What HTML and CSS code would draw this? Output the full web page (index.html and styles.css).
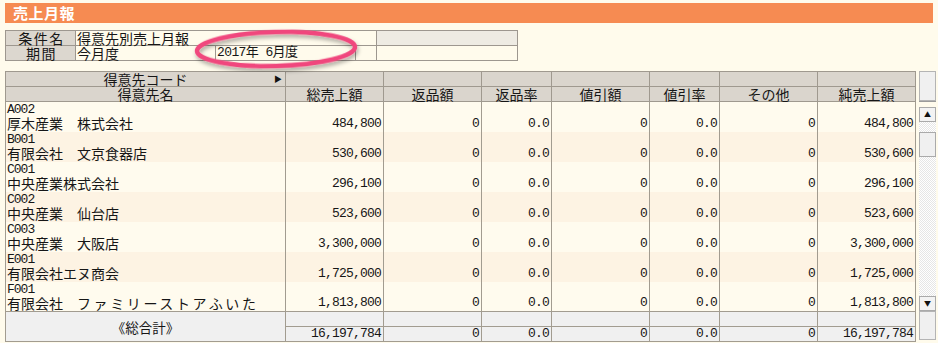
FILE: index.html
```html
<!DOCTYPE html>
<html lang="ja">
<head>
<meta charset="utf-8">
<title>売上月報</title>
<link rel="stylesheet" href="styles.css">
</head>
<body>
<div class="page">
  <div class="titlebar">売上月報</div>

  <div class="cond-wrap">
    <table class="cond">
      <colgroup>
        <col class="c-label"><col class="c-a"><col class="c-b"><col class="c-c"><col class="c-d">
      </colgroup>
      <tr>
        <th class="label">条件名</th>
        <td colspan="3">得意先別売上月報</td>
        <td class="grey"></td>
      </tr>
      <tr>
        <th class="label">期間</th>
        <td>今月度</td>
        <td class="mono-date">2017年 6月度</td>
        <td></td>
        <td></td>
      </tr>
    </table>
    <svg class="mark" width="176" height="52" viewBox="0 0 176 52">
      <defs>
        <filter id="sh" x="-10%" y="-30%" width="120%" height="170%">
          <feDropShadow dx="1" dy="3" stdDeviation="2" flood-color="#000" flood-opacity="0.35"/>
        </filter>
      </defs>
      <ellipse cx="87" cy="22" rx="79" ry="17" fill="none" stroke="#f0477d" stroke-width="4.5" filter="url(#sh)" transform="rotate(-1.5 87 22)"/>
    </svg>
  </div>

  <div class="grid-wrap">
    <table class="grid">
      <colgroup>
        <col class="w280"><col class="w98"><col class="w98"><col class="w70"><col class="w98"><col class="w70"><col class="w98"><col class="w98">
      </colgroup>
      <thead>
        <tr class="h1">
          <th class="code-h">得意先コード<span class="tri">&#9654;</span></th>
          <th></th><th></th><th></th><th></th><th></th><th></th><th></th>
        </tr>
        <tr class="h2">
          <th>得意先名</th><th>総売上額</th><th>返品額</th><th>返品率</th><th>値引額</th><th>値引率</th><th>その他</th><th>純売上額</th>
        </tr>
      </thead>
      <tbody>
        <tr class="odd">
          <td class="name"><div class="code">A002</div><div class="nm">厚木産業　株式会社</div></td>
          <td class="num">484,800</td><td class="num">0</td><td class="num">0.0</td><td class="num">0</td><td class="num">0.0</td><td class="num">0</td><td class="num">484,800</td>
        </tr>
        <tr class="even">
          <td class="name"><div class="code">B001</div><div class="nm">有限会社　文京食器店</div></td>
          <td class="num">530,600</td><td class="num">0</td><td class="num">0.0</td><td class="num">0</td><td class="num">0.0</td><td class="num">0</td><td class="num">530,600</td>
        </tr>
        <tr class="odd">
          <td class="name"><div class="code">C001</div><div class="nm">中央産業株式会社</div></td>
          <td class="num">296,100</td><td class="num">0</td><td class="num">0.0</td><td class="num">0</td><td class="num">0.0</td><td class="num">0</td><td class="num">296,100</td>
        </tr>
        <tr class="even">
          <td class="name"><div class="code">C002</div><div class="nm">中央産業　仙台店</div></td>
          <td class="num">523,600</td><td class="num">0</td><td class="num">0.0</td><td class="num">0</td><td class="num">0.0</td><td class="num">0</td><td class="num">523,600</td>
        </tr>
        <tr class="odd">
          <td class="name"><div class="code">C003</div><div class="nm">中央産業　大阪店</div></td>
          <td class="num">3,300,000</td><td class="num">0</td><td class="num">0.0</td><td class="num">0</td><td class="num">0.0</td><td class="num">0</td><td class="num">3,300,000</td>
        </tr>
        <tr class="even">
          <td class="name"><div class="code">E001</div><div class="nm">有限会社エヌ商会</div></td>
          <td class="num">1,725,000</td><td class="num">0</td><td class="num">0.0</td><td class="num">0</td><td class="num">0.0</td><td class="num">0</td><td class="num">1,725,000</td>
        </tr>
        <tr class="odd">
          <td class="name"><div class="code">F001</div><div class="nm">有限会社　<span class="wide">ファミリーストアふいた</span></div></td>
          <td class="num">1,813,800</td><td class="num">0</td><td class="num">0.0</td><td class="num">0</td><td class="num">0.0</td><td class="num">0</td><td class="num">1,813,800</td>
        </tr>
      </tbody>
      <tfoot>
        <tr class="f1">
          <td class="total-label" rowspan="2">《総合計》</td>
          <td></td><td></td><td></td><td></td><td></td><td></td><td></td>
        </tr>
        <tr class="f2">
          <td class="num">16,197,784</td><td class="num">0</td><td class="num">0.0</td><td class="num">0</td><td class="num">0.0</td><td class="num">0</td><td class="num">16,197,784</td>
        </tr>
      </tfoot>
    </table>

    <div class="vscroll">
      <div class="corner"></div>
      <div class="track-gap"></div>
      <div class="sbtn">&#9650;</div>
      <div class="track short"></div>
      <div class="thumb"></div>
      <div class="track long"></div>
      <div class="sbtn">&#9660;</div>
      <div class="corner bottom"></div>
    </div>
  </div>
</div>
</body>
</html>
```

FILE: styles.css
```css
html, body {
  margin: 0;
  padding: 0;
}

body {
  background: #fffbec;
  width: 938px;
  height: 343px;
  overflow: hidden;
  font-family: "Noto Sans CJK JP", "Noto Sans", sans-serif;
  color: #161616;
}

.page {
  padding: 3px 0 0 5px;
}

.titlebar {
  width: 920px;
  height: 20px;
  background: #f68b52;
  color: #ffffff;
  font-weight: bold;
  font-size: 15px;
  line-height: 20px;
  padding-left: 8px;
  letter-spacing: 0.5px;
}

/* condition table */
.cond-wrap {
  position: relative;
  margin-top: 7px;
  width: 512px;
}

.cond {
  border-collapse: collapse;
  table-layout: fixed;
  width: 512px;
  font-size: 14px;
}

.cond .c-label { width: 70px; }
.cond .c-a { width: 140px; }
.cond .c-b { width: 140px; }
.cond .c-c { width: 21px; }
.cond .c-d { width: 141px; }

.cond th,
.cond td {
  border: 1px solid #9d978f;
  height: 14px;
  padding: 0 0 0 1px;
  line-height: 14px;
  white-space: nowrap;
  text-align: left;
  font-weight: normal;
}

.cond th.label {
  background: #dcd7cf;
  text-align: center;
  letter-spacing: 1.5px;
  padding-left: 2px;
}

.cond td.grey {
  background: #eeebe3;
}

.cond .mono-date {
  font-family: "Liberation Mono", "Noto Sans CJK JP", monospace;
  font-size: 13px;
  letter-spacing: -0.6px;
}

.mark {
  position: absolute;
  left: 184px;
  top: -3px;
  pointer-events: none;
}

/* main grid */
.grid-wrap {
  display: flex;
  align-items: flex-start;
  gap: 3px;
  margin-top: 10px;
}

.grid {
  border-collapse: collapse;
  table-layout: fixed;
  width: 910px;
  font-size: 14px;
}

.w280 { width: 280px; }
.w98 { width: 98px; }
.w70 { width: 70px; }

.grid th {
  background: #dad5cd;
  border: 1px solid #9f998f;
  font-weight: normal;
  height: 14px;
  padding: 0;
  line-height: 14px;
  text-align: center;
  white-space: nowrap;
}

.grid .code-h {
  position: relative;
}

.grid .tri {
  position: absolute;
  right: 3px;
  top: 0;
  font-size: 8px;
  color: #111;
}

.grid td {
  border-left: 1px solid #a29c90;
  border-right: 1px solid #a29c90;
  padding: 0;
  vertical-align: bottom;
  white-space: nowrap;
  overflow: hidden;
}

.grid tbody tr {
  height: 30px;
}

.grid tbody tr.odd td { background: #fffbee; }
.grid tbody tr.even td { background: #fdf3e3; }

.grid td.name {
  padding-left: 1px;
  vertical-align: top;
}

.grid .code {
  font-family: "Liberation Mono", monospace;
  font-size: 13px;
  line-height: 13px;
  letter-spacing: -1px;
  padding-top: 1px;
}

.grid .nm {
  font-size: 14px;
  line-height: 15px;
  height: 15px;
}

.grid .nm .wide {
  letter-spacing: 2.6px;
}

.grid td.num {
  text-align: right;
  padding-right: 2px;
  padding-bottom: 2px;
  font-family: "Liberation Mono", monospace;
  font-size: 13px;
  line-height: 13px;
  letter-spacing: -0.8px;
}

.grid tfoot td {
  background: #f0f0f0;
  border: 1px solid #a29c90;
  height: 14px;
  line-height: 14px;
}

.grid tfoot td.num {
  padding-bottom: 0;
  line-height: 14px;
}

.grid tfoot .total-label {
  text-align: center;
  vertical-align: middle;
  font-size: 13.5px;
}

/* vertical scrollbar */
.vscroll {
  width: 17px;
  display: flex;
  flex-direction: column;
}

.corner {
  height: 28px;
  background: #f0f0f0;
  border: 1px solid #b4b4b4;
}

.corner.bottom {
  height: 27px;
}

.track-gap {
  height: 5px;
  border-top: 1px solid #9a9a9a;
  background: #fffbec;
}

.sbtn {
  height: 13px;
  background: #f3f3f3;
  border: 1px solid #aaaaaa;
  font-size: 7px;
  line-height: 13px;
  text-align: center;
  color: #111;
}

.track {
  background: repeating-conic-gradient(#ffffff 0 25%, #e6e6e6 0 50%) 0 0 / 2px 2px;
}

.track.short { height: 10px; }
.track.long { height: 139px; }

.thumb {
  height: 23px;
  background: #f0f0f0;
  border: 1px solid #aaaaaa;
}
```
